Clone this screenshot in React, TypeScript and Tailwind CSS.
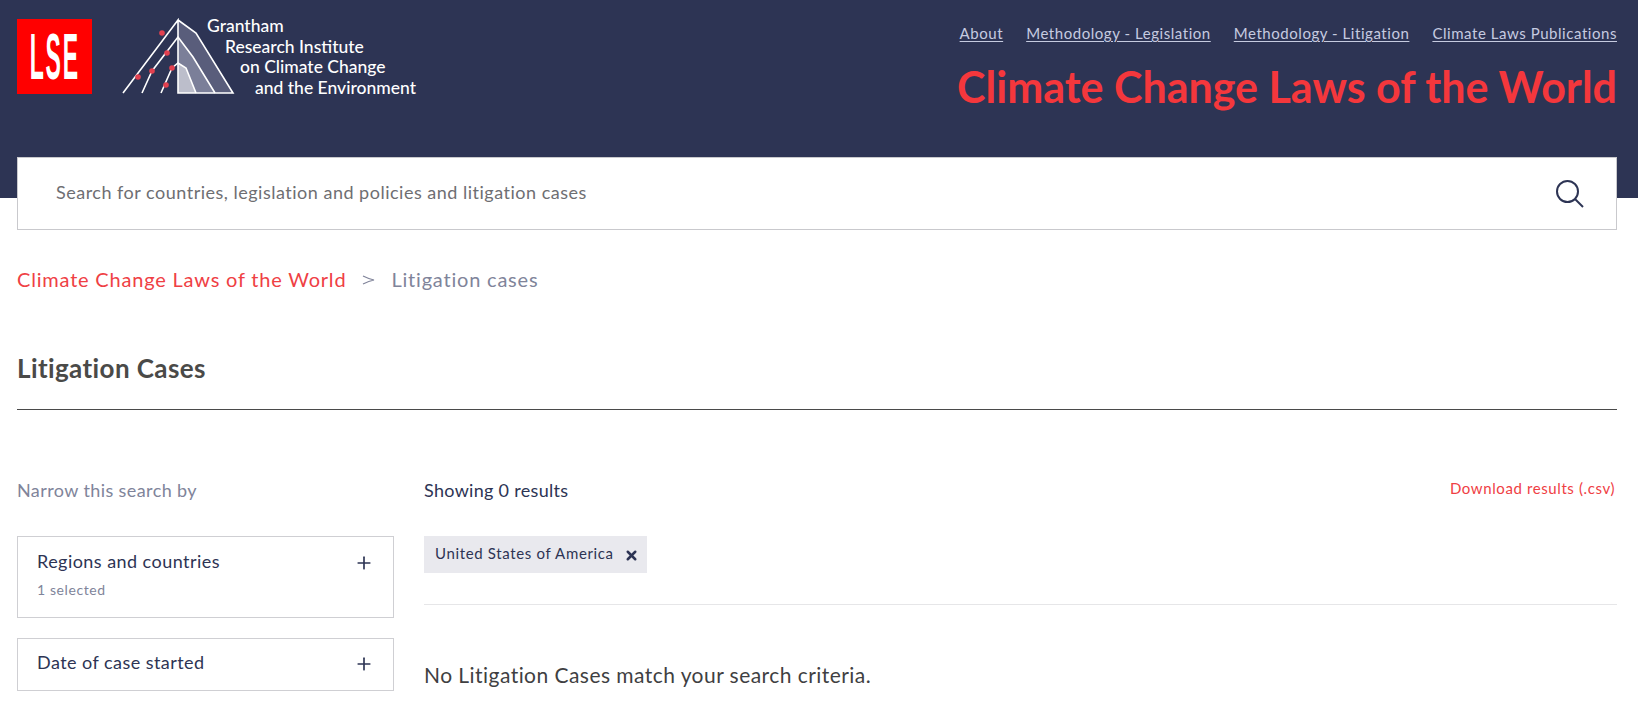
import { Plus, X } from 'lucide-react'

const navLinks = ['About', 'Methodology - Legislation', 'Methodology - Litigation', 'Climate Laws Publications']

function GranthamMark() {
  return (
    <svg width="114" height="78" viewBox="0 0 114 78" fill="none" className="shrink-0 -mt-[1px]">
      <path d="M57 2 L75 15 L112 75 H57 Z" fill="#595d7b" />
      <path d="M57 19 L72 39 L94 75 H57 Z" fill="#7b7f99" />
      <path d="M57 45 L65 50 L75 75 H57 Z" fill="#bcbecb" />
      <g stroke="#fff" strokeWidth="1.6">
        <path d="M2 75 L57 2 V75 H112 L75 15 L57 2" />
        <path d="M21 75 L31 53 L57 19 L72 39 L94 75" />
        <path d="M40 75 L51 50 L57 45 L65 50 L75 75" />
      </g>
      <g fill="#e2404f">
        <circle cx="41" cy="15" r="2.8" />
        <circle cx="46" cy="35" r="2.8" />
        <circle cx="17" cy="59" r="2.8" />
        <circle cx="31" cy="53" r="2.8" />
        <circle cx="51" cy="50" r="2.8" />
        <circle cx="45" cy="67" r="2.8" />
      </g>
    </svg>
  )
}

function FilterBox({ title, sub }: { title: string; sub?: string }) {
  return (
    <div className={`border border-[#cfcfd3] px-[19px] ${sub ? 'h-[82px] pt-[12px]' : 'h-[53px] pt-[11px]'}`}>
      <div className="flex items-center justify-between">
        <span className="text-[18px] leading-[24px] text-[#2d3454] tracking-[0.45px]">{title}</span>
        <Plus size={20} strokeWidth={2} className="text-[#2d3454] mt-[3px]" />
      </div>
      {sub && <div className="mt-[7px] text-[14px] leading-[20px] text-[#80849a] tracking-[0.6px]">{sub}</div>}
    </div>
  )
}

export default function App() {
  return (
    <div className='h-[707px] overflow-hidden bg-white font-["Lato","Liberation_Sans",sans-serif]'>
      <header className="h-[198px] bg-[#2d3454] pl-[17px] pr-[21px] pt-[19px] flex justify-between">
        <div className="flex h-[75px]">
          <div className="w-[75px] h-[75px] bg-[#ff0000] text-white flex items-center justify-center shrink-0 overflow-hidden">
            <span className="inline-block text-[64px] leading-none font-bold tracking-[5px] font-['Liberation_Sans',sans-serif] scale-x-[0.36]">LSE</span>
          </div>
          <div className="flex ml-[29px]">
            <GranthamMark />
            <div className="text-white text-[17.5px] leading-[20.7px] font-medium -ml-[28px] -mt-[3px] whitespace-nowrap">
              <div>Grantham</div>
              <div className="ml-[18px]">Research Institute</div>
              <div className="ml-[33px]">on Climate Change</div>
              <div className="ml-[48px]">and the Environment</div>
            </div>
          </div>
        </div>
        <div className="flex flex-col items-end">
          <nav className="flex gap-[23px] text-[15px] leading-[28px] text-[#c6cbe0] tracking-[0.55px]">
            {navLinks.map((link) => (
              <a key={link} className="underline underline-offset-2">{link}</a>
            ))}
          </nav>
          <h1 className="mt-[12px] text-[43px] leading-[56px] font-bold text-[#f4373c]">Climate Change Laws of the World</h1>
        </div>
      </header>

      <main className="w-[1600px] ml-[17px]">
        <div className="-mt-[41px] h-[73px] bg-white border border-[#c9c9cd] flex items-center justify-between pl-[38px] pr-[31px] relative">
          <span className="text-[18px] text-[#6e6e72] tracking-[0.5px] -mt-[2px]">Search for countries, legislation and policies and litigation cases</span>
          <svg width="30" height="30" viewBox="0 0 30 30" fill="none" stroke="#2d3454" strokeWidth="2">
            <circle cx="12.5" cy="12.5" r="10.5" />
            <path d="M20 20 L28 28" />
          </svg>
        </div>

        <div className="mt-[36px] flex items-center text-[20px] leading-[26px] tracking-[0.8px]">
          <span className="text-[#ef4044]">Climate Change Laws of the World</span>
          <svg width="13" height="10" viewBox="0 0 13 10" fill="none" stroke="#80849a" strokeWidth="1.2" className="mx-[16px] mt-[2px]">
            <path d="M1 1 Q7 4 12 5 Q7 6 1 9" />
          </svg>
          <span className="text-[#80849a]">Litigation cases</span>
        </div>

        <h2 className="mt-[59px] text-[26px] leading-[34px] font-bold text-[#4a4a48] tracking-[0.4px]">Litigation Cases</h2>
        <div className="mt-[24px] border-t border-[#4a4a4a]" />

        <div className="mt-[68px] flex gap-[30px]">
          <aside className="w-[377px] shrink-0">
            <div className="text-[18px] leading-[24px] text-[#80849a] tracking-[0.4px]">Narrow this search by</div>
            <div className="mt-[34px] flex flex-col gap-[20px]">
              <FilterBox title="Regions and countries" sub="1 selected" />
              <FilterBox title="Date of case started" />
            </div>
          </aside>
          <section className="flex-1">
            <div className="flex justify-between items-start">
              <span className="text-[18px] leading-[24px] text-[#2d3454] tracking-[0.3px]">Showing 0 results</span>
              <a className="text-[15px] leading-[20px] text-[#ef4044] tracking-[0.6px] mr-[2px]">Download results (.csv)</a>
            </div>
            <div className="mt-[34px] inline-flex items-center h-[37px] bg-[#e9e9ee] pl-[11px] pr-[8px] gap-[10px]">
              <span className="text-[15px] text-[#2d3454] tracking-[0.65px] -mt-[3px]">United States of America</span>
              <X size={15} strokeWidth={4} className="text-[#2d3454] mt-[2px]" />
            </div>
            <div className="mt-[31px] border-t border-[#e6e6e8]" />
            <p className="mt-[57px] text-[21px] leading-[26px] text-[#3f3f42] tracking-[0.45px]">No Litigation Cases match your search criteria.</p>
          </section>
        </div>
      </main>
    </div>
  )
}
